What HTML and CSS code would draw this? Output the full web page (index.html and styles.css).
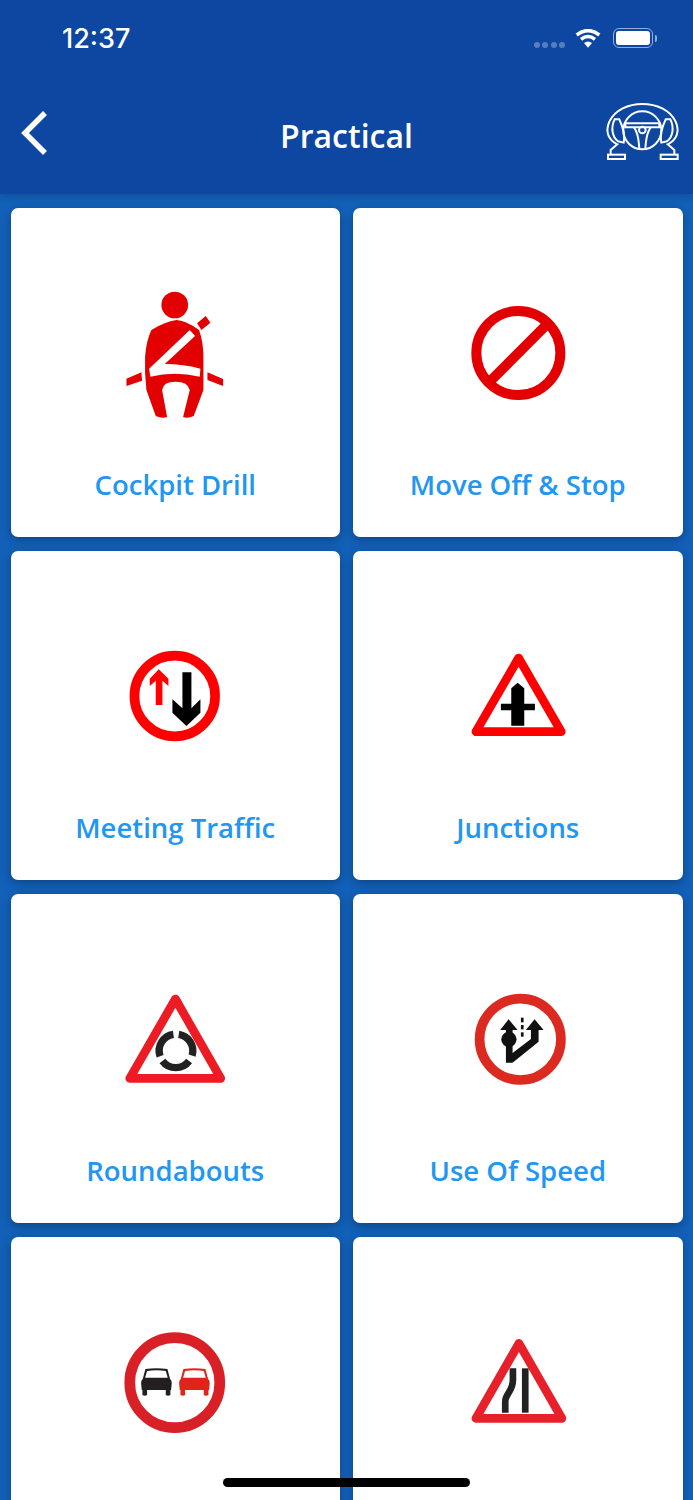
FILE: index.html
```html
<!DOCTYPE html>
<html lang="en">
<head>
    <meta charset="UTF-8">
    <meta name="viewport" content="width=device-width, initial-scale=1.0">
    <title>Practical</title>
    <link rel="stylesheet" href="styles.css">
</head>
<body>
    <header class="header">
        <div class="status-bar">
            <span class="time">12:37</span>
            <div class="status-icons">
                <div class="signal">
                    <span class="signal-dot"></span>
                    <span class="signal-dot"></span>
                    <span class="signal-dot"></span>
                    <span class="signal-dot"></span>
                </div>
                <svg class="wifi" viewBox="0 0 78 57">
                    <path d="M5 18 Q39 -8 73 18" fill="none" stroke="#fff" stroke-width="11"/>
                    <path d="M18 31 Q39 14 60 31" fill="none" stroke="#fff" stroke-width="10"/>
                    <path d="M27 42 L39 56 L51 42 Q39 33 27 42 Z" fill="#fff"/>
                </svg>
                <div class="battery"><div class="battery-fill"></div></div>
                <div class="battery-nub"></div>
            </div>
        </div>
        <nav class="nav">
            <div class="nav-side">
                <svg class="back" viewBox="0 0 30 46">
                    <path d="M25 3 L5 23 L25 43" fill="none" stroke="#fff" stroke-width="5.5"/>
                </svg>
            </div>
            <h1 class="title">Practical</h1>
            <div class="nav-side">
                <svg class="wheel" viewBox="0 0 300 240" fill="none" stroke="#fff" stroke-width="6">
                    <circle cx="157" cy="121" r="57"/>
                    <path d="M62 193 V180 L82 163 C55 150 45 125 58 95 C75 60 115 42 157 42 C200 42 240 60 257 95 C270 125 260 150 233 163 L253 180 V193"/>
                    <path d="M74 88 C62 112 66 140 84 154 L101 158 C105 140 102 118 88 88 Z"/>
                    <path d="M241 88 C253 112 249 140 231 154 L214 158 C210 140 213 118 227 88 Z"/>
                    <path d="M106 100 H208 V112 H106 Z"/>
                    <circle cx="157" cy="120" r="10"/>
                    <path d="M132 112 C140 125 145 135 148 176 M182 112 C174 125 169 135 166 176"/>
                    <rect x="54" y="194" width="51" height="13"/>
                    <rect x="212" y="194" width="51" height="13"/>
                </svg>
            </div>
        </nav>
    </header>

    <main class="grid">
        <a class="card">
            <svg class="sign" viewBox="0 0 420 420">
                <g transform="translate(14.25 -9)" fill="#e30000">
                    <circle cx="195" cy="75" r="40"/>
                    <path d="M125 150 Q165 125 200 120 Q225 120 268 150 Q282 190 281 240 L281 330 L252 408 Q235 416 220 411 L240 330 Q235 305 197 305 Q160 305 157 330 L172 411 Q155 416 138 408 L110 330 Q104 280 106 230 Q110 180 125 150 Z"/>
                    <path d="M262 130 L288 108 L302 128 L275 150 Z"/>
                    <path d="M50 296 L95 277 L97 302 L50 318 Z"/>
                    <path d="M293 277 L340 297 L340 318 L293 300 Z"/>
                    <path d="M118 266 L240 150 L256 168 L165 252 Q220 252 272 266 L270 290 Q195 272 122 290 Z" fill="#fff"/>
                </g>
            </svg>
            <span class="label">Cockpit Drill</span>
        </a>
        <a class="card">
            <svg class="sign" viewBox="0 0 420 420" fill="none" stroke="#e30000">
                <circle cx="211" cy="210" r="126" stroke-width="30"/>
                <path d="M122 299 L300 121" stroke-width="30"/>
            </svg>
            <span class="label">Move Off &amp; Stop</span>
        </a>
        <a class="card">
            <svg class="sign" viewBox="0 0 420 420">
                <g transform="translate(14.25 42)">
                    <circle cx="195" cy="168" r="121" fill="none" stroke="#f00" stroke-width="29"/>
                    <path d="M147 88 L176 116 V138 L158 122 V195 H138 V122 L120 138 V116 Z" fill="#f00"/>
                    <path d="M218 97 H245 V205 L272 178 V218 L230 258 L188 218 V178 L218 205 Z" fill="#000"/>
                </g>
            </svg>
            <span class="label">Meeting Traffic</span>
        </a>
        <a class="card">
            <svg class="sign" viewBox="0 0 420 420">
                <g transform="translate(36.75 57)">
                    <path d="M175 39 L47 260 H303 Z" fill="#fff" stroke="#f00" stroke-width="26" stroke-linejoin="round"/>
                    <path d="M172 113 L192 130 V176 H224 V196 H192 V242 H153 V196 H122 V176 H153 V130 Z" fill="#000"/>
                </g>
            </svg>
            <span class="label">Junctions</span>
        </a>
        <a class="card">
            <svg class="sign" viewBox="0 0 420 420">
                <g transform="translate(29.25 48)">
                    <path d="M182 42 L45 280 H318 Z" fill="#fff" stroke="#ed1c24" stroke-width="26" stroke-linejoin="round"/>
                    <g fill="none" stroke="#222" stroke-width="22">
                        <path d="M176 148 A50 50 0 0 0 136 214"/>
                        <path d="M192 148 A50 50 0 0 1 232 212"/>
                        <path d="M143 228 A50 50 0 0 0 223 228"/>
                    </g>
                </g>
            </svg>
            <span class="label">Roundabouts</span>
        </a>
        <a class="card">
            <svg class="sign" viewBox="0 0 420 420">
                <g transform="translate(51.75 48)">
                    <circle cx="165" cy="163" r="122" fill="none" stroke="#dc2a20" stroke-width="29"/>
                    <g fill="#111">
                        <circle cx="131" cy="163" r="23"/>
                        <path d="M130 103 L157 135 H142 V233 H122 V135 H105 Z"/>
                        <path d="M208 103 L235 135 H220 V170 L142 233 L134 210 L197 162 V135 H182 Z"/>
                        <rect x="167" y="98" width="8" height="14"/>
                        <rect x="167" y="120" width="8" height="13"/>
                        <rect x="167" y="142" width="8" height="13"/>
                    </g>
                </g>
            </svg>
            <span class="label">Use Of Speed</span>
        </a>
        <a class="card">
            <svg class="sign" viewBox="0 0 420 420">
                <defs>
                    <g id="car">
                        <path d="M92 132 Q125 127 158 132 L166 162 Q171 165 171 175 L169 195 H167 V210 Q160 214 153 210 V195 H97 V210 Q90 214 83 210 V195 H81 L79 175 Q79 165 84 162 Z"/>
                        <path d="M97 138 Q125 134 153 138 L159 158 H91 Z" fill="#fff"/>
                    </g>
                </defs>
                <g transform="translate(29.25 39)">
                    <circle cx="180" cy="173" r="135" fill="none" stroke="#d92027" stroke-width="32"/>
                    <use href="#car" fill="#231f20"/>
                    <use href="#car" x="114" fill="#e0241c"/>
                </g>
            </svg>
        </a>
        <a class="card">
            <svg class="sign" viewBox="0 0 420 420">
                <g transform="translate(36.75 54)">
                    <path d="M176 40 L47 265 H305 Z" fill="#fff" stroke="#e8202a" stroke-width="26" stroke-linejoin="round"/>
                    <g fill="none" stroke="#222" stroke-width="20">
                        <path d="M158 115 V150 C158 185 135 190 135 215 V248"/>
                        <path d="M195 115 V248"/>
                    </g>
                </g>
            </svg>
        </a>
    </main>

    <div class="home-indicator"></div>
</body>
</html>
```

FILE: styles.css
```css
html, body {
    margin: 0;
    height: 1500px;
    overflow: hidden;
}
body {
    position: relative;
    background-color: #1260b8;
    font-family: "Open Sans", "Noto Sans", sans-serif;
}

/* header */
.header {
    position: relative;
    z-index: 1;
    height: 194px;
    background-color: #0e47a1;
    box-shadow: 0 2px 8px rgba(0, 0, 0, 0.2);
}
.status-bar {
    display: flex;
    align-items: center;
    justify-content: space-between;
    height: 76px;
    padding: 0 36px 0 62px;
}
.time {
    color: white;
    font-family: Inter, Roboto, sans-serif;
    font-size: 27px;
    font-weight: 500;
}
.status-icons {
    display: flex;
    align-items: center;
}
.signal {
    display: flex;
    gap: 2.5px;
    margin: 13px 10px 0 0;
}
.signal-dot {
    width: 6px;
    height: 6px;
    border-radius: 50%;
    background-color: rgba(255, 255, 255, 0.3);
}
.wifi {
    width: 26px;
    height: 19px;
    margin: 0 12px 0 0;
}
.battery {
    box-sizing: border-box;
    width: 40px;
    height: 20px;
    padding: 2px;
    border: 1.5px solid rgba(255, 255, 255, 0.55);
    border-radius: 6px;
}
.battery-fill {
    height: 100%;
    background-color: white;
    border-radius: 3px;
}
.battery-nub {
    width: 2px;
    height: 7px;
    margin-left: 2px;
    background-color: rgba(255, 255, 255, 0.55);
    border-radius: 0 2px 2px 0;
}
.nav {
    display: flex;
    align-items: center;
    height: 118px;
    padding: 0 3px;
}
.nav-side {
    display: flex;
    justify-content: flex-end;
    width: 100px;
}
.nav-side:first-child {
    justify-content: flex-start;
}
.back {
    width: 30px;
    height: 46px;
    margin: 0 0 5px 17px;
}
.wheel {
    width: 100px;
    height: 80px;
    margin-bottom: 10px;
}
.title {
    flex: 1;
    margin: 0;
    color: white;
    font-size: 32px;
    font-weight: 600;
    text-align: center;
}

/* cards */
.grid {
    display: grid;
    grid-template-columns: 1fr 1fr;
    grid-auto-rows: 329px;
    gap: 14px 13px;
    padding: 14px 10.5px;
}
.card {
    display: flex;
    flex-direction: column;
    align-items: center;
    background-color: white;
    border-radius: 7px;
    box-shadow: 0 3px 10px rgba(0, 0, 0, 0.28);
}
.sign {
    width: 140px;
    height: 140px;
    margin-top: 75px;
}
.label {
    margin-top: 43px;
    color: #2196f3;
    font-size: 27.5px;
    font-weight: 600;
    line-height: 38px;
}

.home-indicator {
    position: absolute;
    left: 223px;
    top: 1478px;
    width: 247px;
    height: 9px;
    background-color: black;
    border-radius: 5px;
}
```
